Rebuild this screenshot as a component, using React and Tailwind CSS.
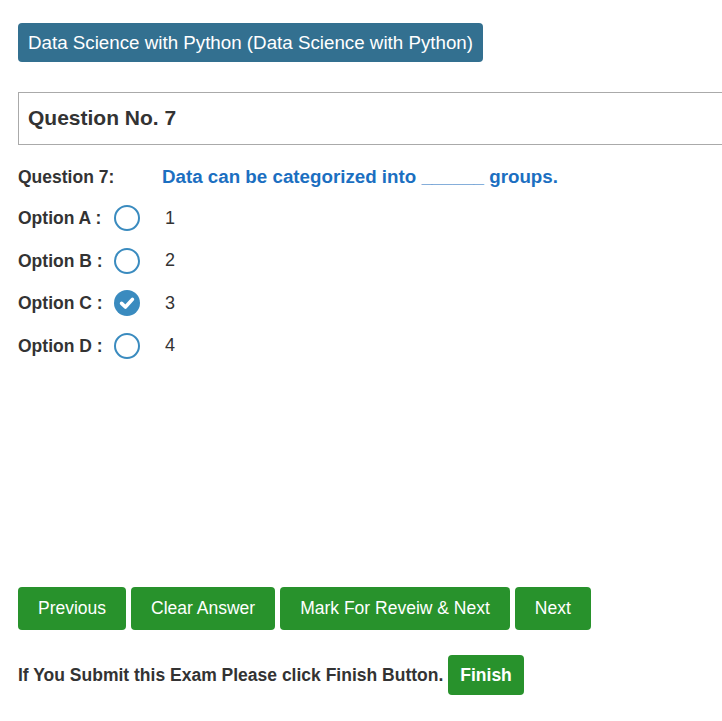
import { useState } from 'react'

const OPTIONS = [
    { key: 'A', value: '1' },
    { key: 'B', value: '2' },
    { key: 'C', value: '3' },
    { key: 'D', value: '4' },
]

function Radio({ checked, onClick }) {
    if (checked) {
        return (
            <button onClick={onClick} className="w-[26px] h-[26px] rounded-full bg-[#3a8bbf] flex items-center justify-center">
                <svg width="18" height="18" viewBox="0 0 16 16">
                    <path d="M3.2 8.3 L6.6 11.6 L12.8 4.8" fill="none" stroke="#fff" strokeWidth="3.2" strokeLinecap="round" strokeLinejoin="round" />
                </svg>
            </button>
        )
    }
    return <button onClick={onClick} className="w-[26px] h-[26px] rounded-full border-2 border-[#3a8bbf] bg-white" />
}

function GreenButton({ children }) {
    return (
        <button className="h-[43px] px-5 rounded bg-[#28922c] text-white text-[17.5px]">
            {children}
        </button>
    )
}

export default function App() {
    const [answer, setAnswer] = useState('C')

    return (
        <div className="min-h-screen bg-white overflow-hidden font-['Liberation_Sans',Arial,sans-serif] text-[#333]">
            <div className="pl-[18px] pt-[23px]">
                {/* course badge */}
                <div className="inline-block h-[39px] px-[10px] rounded bg-[#337090] text-white text-[18.75px] leading-[39px]">
                    Data Science with Python (Data Science with Python)
                </div>

                {/* question header */}
                <div className="mt-[30px] w-[720px] h-[53px] border border-[#aaa] flex items-center pl-[9px]">
                    <h2 className="text-[21px] font-bold text-[#333] -mt-[2px]">Question No. 7</h2>
                </div>

                {/* question */}
                <div className="flex items-center mt-[20px] h-[24px]">
                    <span className="w-[144px] text-[17.5px] font-bold">Question 7:</span>
                    <span className="text-[18.75px] font-bold text-[#1b6fc1]">Data can be categorized into ______ groups.</span>
                </div>

                {/* options */}
                <div className="flex flex-col mt-[8px]">
                    {OPTIONS.map((o) => (
                        <div key={o.key} className="flex items-center h-[42.5px]">
                            <span className="w-[96px] text-[17.5px] font-bold">Option {o.key} :</span>
                            <Radio checked={answer === o.key} onClick={() => setAnswer(o.key)} />
                            <span className="ml-[25px] text-[18px] text-[#333]">{o.value}</span>
                        </div>
                    ))}
                </div>

                {/* nav buttons */}
                <div className="flex gap-[5px] mt-[220px]">
                    <GreenButton>Previous</GreenButton>
                    <GreenButton>Clear Answer</GreenButton>
                    <GreenButton>Mark For Reveiw &amp; Next</GreenButton>
                    <GreenButton>Next</GreenButton>
                </div>

                <div className="flex items-center mt-[25px] gap-[5px]">
                    <span className="text-[17.5px] font-bold">If You Submit this Exam Please click Finish Button.</span>
                    <button className="h-[40px] px-[12px] rounded bg-[#28922c] text-white text-[17.5px] font-bold">Finish</button>
                </div>
            </div>
        </div>
    )
}
